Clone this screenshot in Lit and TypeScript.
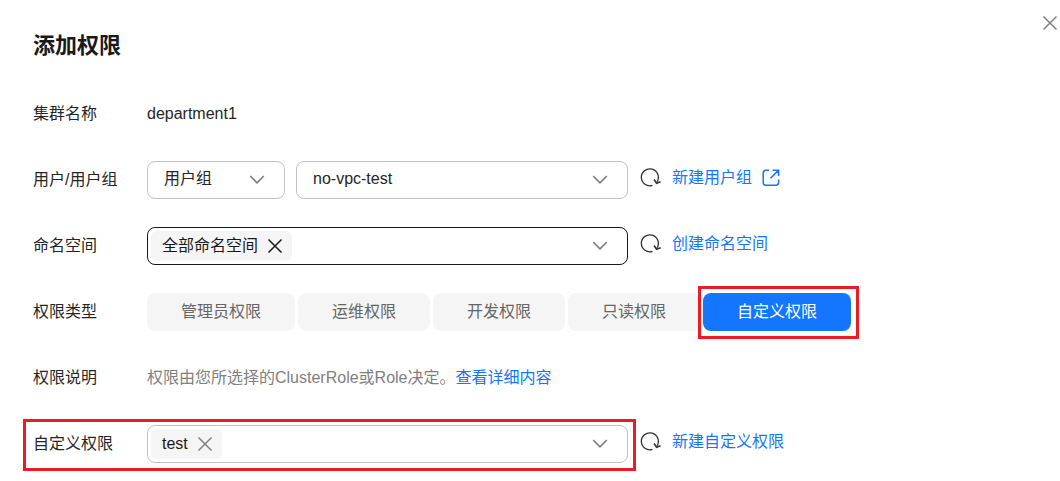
import { LitElement, html, css, svg } from "lit";
import { customElement, property, state } from "lit/decorators.js";

const chevron = html`<svg class="chevron" width="16" height="16" viewBox="0 0 16 16" aria-hidden="true">
  <path d="M1.2 4 L8 10.8 L14.8 4" fill="none" stroke="currentColor" stroke-width="1.7" stroke-linejoin="round" />
</svg>`;

const cross = html`<svg width="16" height="16" viewBox="0 0 16 16" aria-hidden="true">
  <path d="M1.5 1.5 L14.5 14.5 M14.5 1.5 L1.5 14.5" fill="none" stroke="currentColor" stroke-width="1.5" />
</svg>`;

const refreshShape = svg`<path d="M13.5 17.4 A8.5 8.5 0 1 1 18 13.9" fill="none" stroke="currentColor" stroke-width="1.3" />
  <path d="M15 11.6 L17.6 15.2 L21.6 13.8" fill="none" stroke="currentColor" stroke-width="1.7" />`;

const external = html`<svg width="18" height="18" viewBox="0 0 18 18" aria-hidden="true">
  <path d="M7 1.2 H4 Q1.2 1.2 1.2 4 V13.5 Q1.2 16.3 4 16.3 H13.5 Q16.6 16.3 16.6 13.5 V10.5 M10.5 1.2 H16.6 V7 M16.4 1.4 L8.5 9.3" fill="none" stroke="currentColor" stroke-width="1.5" />
</svg>`;

const TYPES = ["管理员权限", "运维权限", "开发权限", "只读权限", "自定义权限"];

@customElement("tag-select")
export class TagSelect extends LitElement {
  @property() label = "";
  @property() value = "";
  @property({ type: Boolean, reflect: true }) active = false;

  static styles = css`
    :host {
      display: block;
      flex: 0 1 481px;
      min-width: 0;
    }
    .box {
      display: flex;
      align-items: center;
      box-sizing: border-box;
      height: 38px;
      padding: 0 19px 0 3px;
      border: 1px solid #c2c2c2;
      border-radius: 8px;
      background: #fff;
    }
    :host([active]) .box {
      border-color: #191919;
    }
    .tag {
      display: flex;
      align-items: center;
      gap: 9px;
      flex: none;
      height: 30px;
      padding: 0 9px 0 11px;
      border-radius: 6px;
      background: #f5f5f5;
      color: #191919;
    }
    button {
      display: flex;
      padding: 0;
      border: 0;
      background: none;
      color: #808080;
      cursor: pointer;
    }
    :host([active]) .remove {
      color: #191919;
    }
    input {
      flex: 1;
      min-width: 0;
      border: 0;
      outline: 0;
      background: none;
      font: inherit;
    }
  `;

  render() {
    return html`<div class="box">
      ${this.value
        ? html`<span class="tag"
            >${this.value}<button class="remove" aria-label="移除" @click=${() => (this.value = "")}>${cross}</button></span
          >`
        : ""}
      <input role="combobox" aria-expanded="false" aria-label=${this.label} />
      <button aria-label="展开">${chevron}</button>
    </div>`;
  }
}

@customElement("app-root")
export class AppRoot extends LitElement {
  @state() private type = "自定义权限";

  static styles = css`
    :host {
      display: block;
      background: #fff;
      color: #262626;
      font: 16px/24px "Liberation Sans", "Noto Sans CJK SC", sans-serif;
    }
    header {
      display: flex;
      justify-content: space-between;
      align-items: flex-start;
      padding: 15px 2px 0 33px;
    }
    h1 {
      margin: 15px 0 0;
      color: #191919;
      font-size: 22px;
      line-height: 32px;
      font-weight: 700;
    }
    button {
      padding: 0;
      border: 0;
      background: none;
      font: inherit;
      cursor: pointer;
    }
    .close,
    .refresh {
      display: flex;
      color: #808080;
    }
    .refresh {
      color: #333;
    }
    form {
      display: flex;
      flex-direction: column;
      gap: 28px;
      padding: 33px 33px 18px;
    }
    .row {
      display: flex;
      align-items: center;
      gap: 11px;
      min-height: 38px;
    }
    .field {
      display: flex;
      align-items: center;
      flex: 0 1 595px;
      min-width: 0;
    }
    .name {
      flex: 0 0 114px;
    }
    .picks {
      display: flex;
      gap: 11px;
      flex: 0 1 481px;
      min-width: 0;
    }
    .select {
      display: grid;
      align-items: center;
      flex: 1;
      min-width: 0;
      color: #808080;
    }
    .select.small {
      flex: 0 0 138px;
    }
    .select > * {
      grid-area: 1 / 1;
    }
    .select .chevron {
      justify-self: end;
      margin-right: 20px;
      pointer-events: none;
    }
    select {
      appearance: none;
      box-sizing: border-box;
      width: 100%;
      height: 38px;
      padding: 0 40px 3px 16px;
      border: 1px solid #c2c2c2;
      border-radius: 8px;
      background: #fff;
      color: #262626;
      font: inherit;
    }
    .side {
      display: flex;
      align-items: center;
      gap: 11px;
      padding-bottom: 4px;
    }
    a {
      display: flex;
      align-items: center;
      gap: 10px;
      color: #1476ff;
      text-decoration: none;
      white-space: nowrap;
    }
    .types {
      display: flex;
      gap: 3px;
    }
    .type {
      position: relative;
      height: 38px;
      min-width: 132px;
      padding: 0 34px;
      border-radius: 8px;
      background: #f5f5f5;
      color: #666;
      white-space: nowrap;
    }
    .type.wide {
      min-width: 148px;
    }
    .type.on {
      background: #1476ff;
      color: #fff;
    }
    .note {
      display: flex;
      color: #808080;
      white-space: nowrap;
    }
    .marked {
      position: relative;
    }
    .marked::after {
      content: "";
      position: absolute;
      inset: -6px -8px -8px -10px;
      border: 3px solid #ed1c24;
      pointer-events: none;
    }
    .type.marked::after {
      inset: -7px -8px -8px -5px;
    }
  `;

  private side(text: string, icon: unknown = "") {
    return html`<div class="side">
      <button class="refresh" type="button" aria-label="刷新">
        <svg width="22" height="20" viewBox="0 0 22 20" aria-hidden="true">${refreshShape}</svg>
      </button>
      <a href="#">${text}${icon}</a>
    </div>`;
  }

  render() {
    return html`
      <header>
        <h1>添加权限</h1>
        <button class="close" aria-label="关闭">${cross}</button>
      </header>
      <form @submit=${(e: Event) => e.preventDefault()}>
        <div class="row">
          <div class="field"><span class="name">集群名称</span><span>department1</span></div>
        </div>
        <div class="row">
          <div class="field">
            <label class="name" for="group">用户/用户组</label>
            <div class="picks">
              <div class="select small">
                <select aria-label="类型"><option>用户组</option></select>${chevron}
              </div>
              <div class="select">
                <select id="group"><option>no-vpc-test</option></select>${chevron}
              </div>
            </div>
          </div>
          ${this.side("新建用户组", external)}
        </div>
        <div class="row">
          <div class="field">
            <span class="name">命名空间</span>
            <tag-select active label="命名空间" value="全部命名空间"></tag-select>
          </div>
          ${this.side("创建命名空间")}
        </div>
        <div class="row">
          <div class="field">
            <span class="name">权限类型</span>
            <div class="types" role="group" aria-label="权限类型">
              ${TYPES.map(
                (t) => html`<button
                  type="button"
                  class="type ${t.length > 4 ? "wide" : ""} ${t === this.type ? "on marked" : ""}"
                  aria-pressed=${t === this.type}
                  @click=${() => (this.type = t)}
                >${t}</button>`
              )}
            </div>
          </div>
        </div>
        <div class="row">
          <div class="field">
            <span class="name">权限说明</span>
            <div class="note"><span>权限由您所选择的ClusterRole或Role决定。</span><a href="#">查看详细内容</a></div>
          </div>
        </div>
        <div class="row">
          <div class="field marked">
            <span class="name">自定义权限</span>
            <tag-select label="自定义权限" value="test"></tag-select>
          </div>
          ${this.side("新建自定义权限")}
        </div>
      </form>
    `;
  }
}
